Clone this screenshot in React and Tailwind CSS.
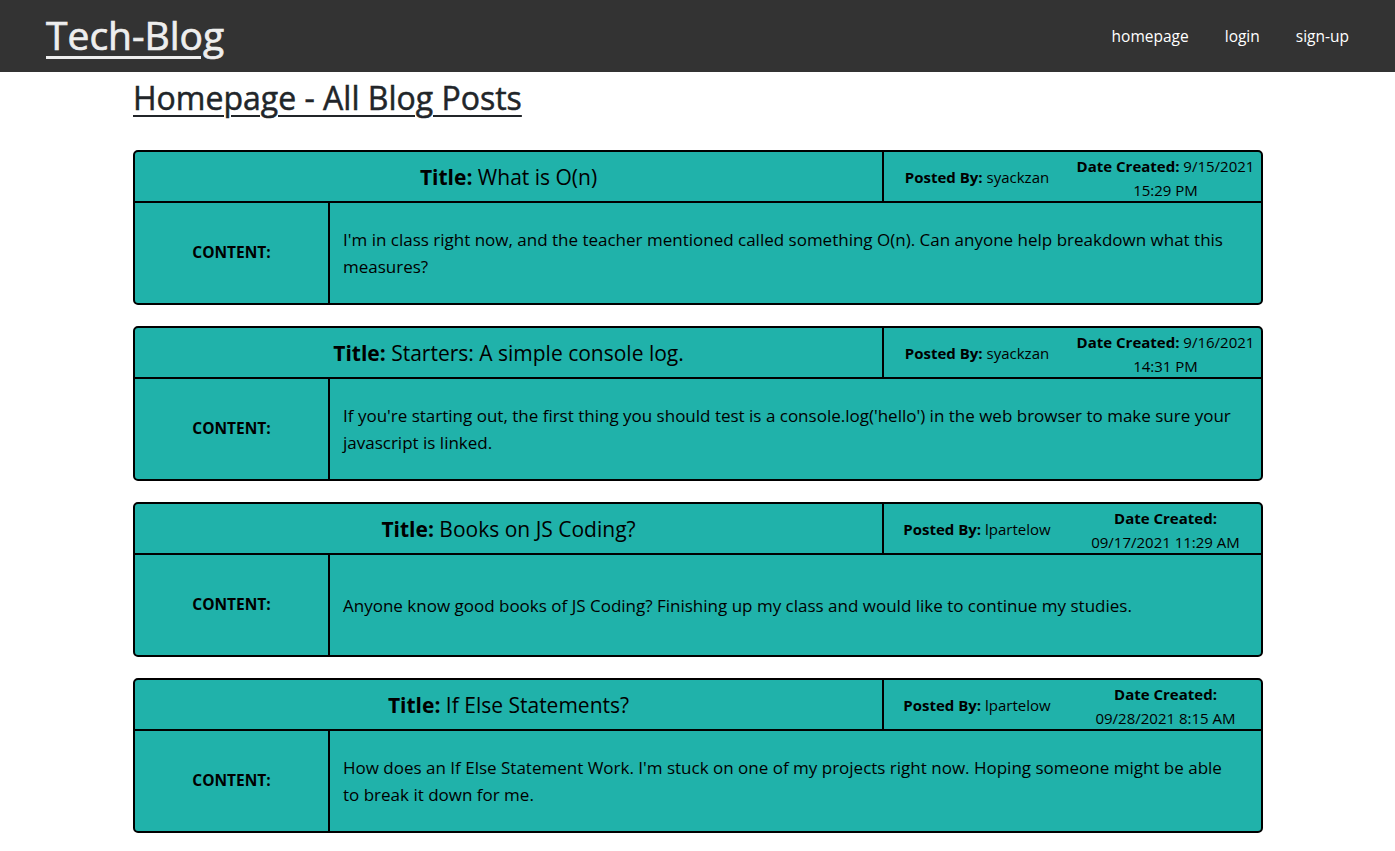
const posts = [
  {
    title: 'What is O(n)',
    author: 'syackzan',
    dateLabelInline: true,
    date: '9/15/2021',
    time: '15:29 PM',
    content:
      "I'm in class right now, and the teacher mentioned called something O(n). Can anyone help breakdown what this measures?",
  },
  {
    title: 'Starters: A simple console log.',
    author: 'syackzan',
    dateLabelInline: true,
    date: '9/16/2021',
    time: '14:31 PM',
    content:
      "If you're starting out, the first thing you should test is a console.log('hello') in the web browser to make sure your javascript is linked.",
  },
  {
    title: 'Books on JS Coding?',
    author: 'lpartelow',
    dateLabelInline: false,
    date: '09/17/2021 11:29 AM',
    content:
      'Anyone know good books of JS Coding? Finishing up my class and would like to continue my studies.',
  },
  {
    title: 'If Else Statements?',
    author: 'lpartelow',
    dateLabelInline: false,
    date: '09/28/2021 8:15 AM',
    content:
      "How does an If Else Statement Work. I'm stuck on one of my projects right now. Hoping someone might be able to break it down for me.",
  },
];

function PostCard({ post }) {
  return (
    <div className="border-2 border-black rounded-[5px] bg-[#20b2aa] overflow-hidden mb-[21px]">
      {/* header */}
      <div className="flex h-[51px] border-b-2 border-black">
        <div className="flex-1 flex items-center justify-center border-r-2 border-black text-[21px] pt-[2px]">
          <span className="font-bold">Title:</span>&nbsp;{post.title}
        </div>
        <div className="w-[377px] flex">
          <div className="w-[186px] flex items-center justify-center text-[15px] pt-[2px]">
            <span className="font-bold">Posted By:</span>&nbsp;{post.author}
          </div>
          <div className="flex-1 text-center text-[15px] leading-[24px] pt-[2px]">
            {post.dateLabelInline ? (
              <>
                <span className="font-bold">Date Created:</span> {post.date}
                <br />
                {post.time}
              </>
            ) : (
              <>
                <span className="font-bold">Date Created:</span>
                <br />
                {post.date}
              </>
            )}
          </div>
        </div>
      </div>
      {/* content */}
      <div className="flex h-[100px]">
        <div className="w-[195px] shrink-0 flex items-center justify-center border-r-2 border-black text-[15.5px] font-bold">
          CONTENT:
        </div>
        <div className="flex-1 flex items-center pl-[13px] pr-[20px] text-[17px] leading-[27px]">
          <p>{post.content}</p>
        </div>
      </div>
    </div>
  );
}

export default function App() {
  return (
    <div className="min-h-screen bg-white text-[#212529] font-['Open_Sans',sans-serif]">
      <header className="bg-[#333333] h-[72px] flex items-center justify-between pl-[46px] pr-[46px]">
        <a href="#" className="text-[39px] leading-none text-[#eeeeee] [-webkit-text-stroke:0.7px_#eeeeee] underline underline-offset-[6px] decoration-[3px] pb-[4px]">
          Tech-Blog
        </a>
        <nav className="flex gap-[36px] text-[15.5px] text-white pt-[2px]">
          <a href="#">homepage</a>
          <a href="#">login</a>
          <a href="#">sign-up</a>
        </nav>
      </header>

      <main className="w-[1130px] ml-[133px]">
        <h2 className="text-[32px] leading-[40px] [-webkit-text-stroke:0.5px_#212529] underline underline-offset-[5px] decoration-2 mt-[6px] mb-[32px]">
          Homepage - All Blog Posts
        </h2>
        <div className="text-black">
          {posts.map((p) => (
            <PostCard key={p.title} post={p} />
          ))}
        </div>
      </main>
    </div>
  );
}
